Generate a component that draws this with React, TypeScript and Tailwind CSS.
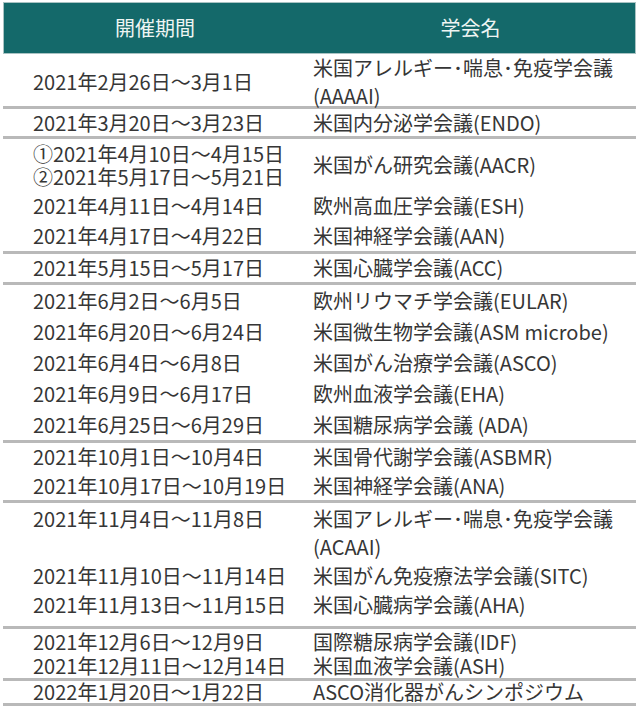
/**
 * 学会スケジュール表 — 開催期間 / 学会名
 * 月ごとのグループを太めの罫線で区切る。
 */

/* ─── 型 ─── */

interface Row {
  date: string[];
  name: string[];
  h: number;
  top?: boolean;
}

interface Group {
  rows: Row[];
  pb?: number;
}

/* ─── データ ─── */

const GROUPS: Group[] = [
  {
    rows: [
      {
        date: ["2021年2月26日～3月1日"],
        name: ["米国アレルギー･喘息･免疫学会議", "(AAAAI)"],
        h: 52,
      },
    ],
  },
  {
    rows: [{ date: ["2021年3月20日～3月23日"], name: ["米国内分泌学会議(ENDO)"], h: 27 }],
  },
  {
    rows: [
      {
        date: ["①2021年4月10日～4月15日", "②2021年5月17日～5月21日"],
        name: ["米国がん研究会議(AACR)"],
        h: 52,
      },
      { date: ["2021年4月11日～4月14日"], name: ["欧州高血圧学会議(ESH)"], h: 30 },
      { date: ["2021年4月17日～4月22日"], name: ["米国神経学会議(AAN)"], h: 30 },
    ],
  },
  {
    rows: [{ date: ["2021年5月15日～5月17日"], name: ["米国心臓学会議(ACC)"], h: 28 }],
  },
  {
    rows: [
      { date: ["2021年6月2日～6月5日"], name: ["欧州リウマチ学会議(EULAR)"], h: 31 },
      { date: ["2021年6月20日～6月24日"], name: ["米国微生物学会議(ASM microbe)"], h: 31 },
      { date: ["2021年6月4日～6月8日"], name: ["米国がん治療学会議(ASCO)"], h: 31 },
      { date: ["2021年6月9日～6月17日"], name: ["欧州血液学会議(EHA)"], h: 31 },
      { date: ["2021年6月25日～6月29日"], name: ["米国糖尿病学会議 (ADA)"], h: 31 },
    ],
  },
  {
    rows: [
      { date: ["2021年10月1日～10月4日"], name: ["米国骨代謝学会議(ASBMR)"], h: 28 },
      { date: ["2021年10月17日～10月19日"], name: ["米国神経学会議(ANA)"], h: 29 },
    ],
  },
  {
    rows: [
      {
        date: ["2021年11月4日～11月8日"],
        name: ["米国アレルギー･喘息･免疫学会議", "(ACAAI)"],
        h: 58,
        top: true,
      },
      { date: ["2021年11月10日～11月14日"], name: ["米国がん免疫療法学会議(SITC)"], h: 29 },
      { date: ["2021年11月13日～11月15日"], name: ["米国心臓病学会議(AHA)"], h: 29 },
    ],
    pb: 7,
  },
  {
    rows: [
      { date: ["2021年12月6日～12月9日"], name: ["国際糖尿病学会議(IDF)"], h: 25 },
      { date: ["2021年12月11日～12月14日"], name: ["米国血液学会議(ASH)"], h: 24 },
    ],
  },
  {
    rows: [{ date: ["2022年1月20日～1月22日"], name: ["ASCO消化器がんシンポジウム"], h: 22 }],
  },
];

const FONT = { fontFamily: '"Noto Sans CJK JP", "Noto Sans", sans-serif' };

/* ─── 行 ─── */

function lead(lines: number, top?: boolean) {
  if (lines > 1) return "leading-[28px]";
  return top ? "leading-[28px]" : "leading-[22px]";
}

function TableRow({ row }: { row: Row }) {
  const align = row.top ? "items-start pt-[2px]" : "items-center";
  const dateLead = row.date.length > 1 ? "leading-[23px]" : lead(1, row.top);
  return (
    <div className="grid grid-cols-[302px_1fr]" style={{ height: row.h }}>
      <div className={`flex pl-[30px] ${align}`}>
        <div className={dateLead}>
          {row.date.map((d) => (
            <div key={d} className="whitespace-nowrap">
              {d}
            </div>
          ))}
        </div>
      </div>
      <div className={`flex pl-[8px] ${align}`}>
        <div className={lead(row.name.length, row.top)}>
          {row.name.map((n) => (
            <div key={n} className="whitespace-nowrap">
              {n}
            </div>
          ))}
        </div>
      </div>
    </div>
  );
}

/* ─── 表 ─── */

export default function App() {
  return (
    <div className="w-[640px] h-[716px] bg-white overflow-hidden" style={FONT}>
      <div className="ml-[3px] w-[633px] pt-[2px]">
        <div className="grid grid-cols-[302px_1fr] h-[52px] bg-[#14696a] border border-[#a9c3c3] text-[20px] text-[#eef5f3]">
          <div className="flex items-center justify-center">開催期間</div>
          <div className="flex items-center justify-center">学会名</div>
        </div>
        <div className="text-[20px] text-[#363636]">
          {GROUPS.map((g, i) => (
            <div
              key={i}
              className="border-b-[3px] border-[#b9b9b9]"
              style={{ paddingBottom: g.pb ?? 0 }}
            >
              {g.rows.map((r, j) => (
                <TableRow key={j} row={r} />
              ))}
            </div>
          ))}
        </div>
      </div>
    </div>
  );
}
